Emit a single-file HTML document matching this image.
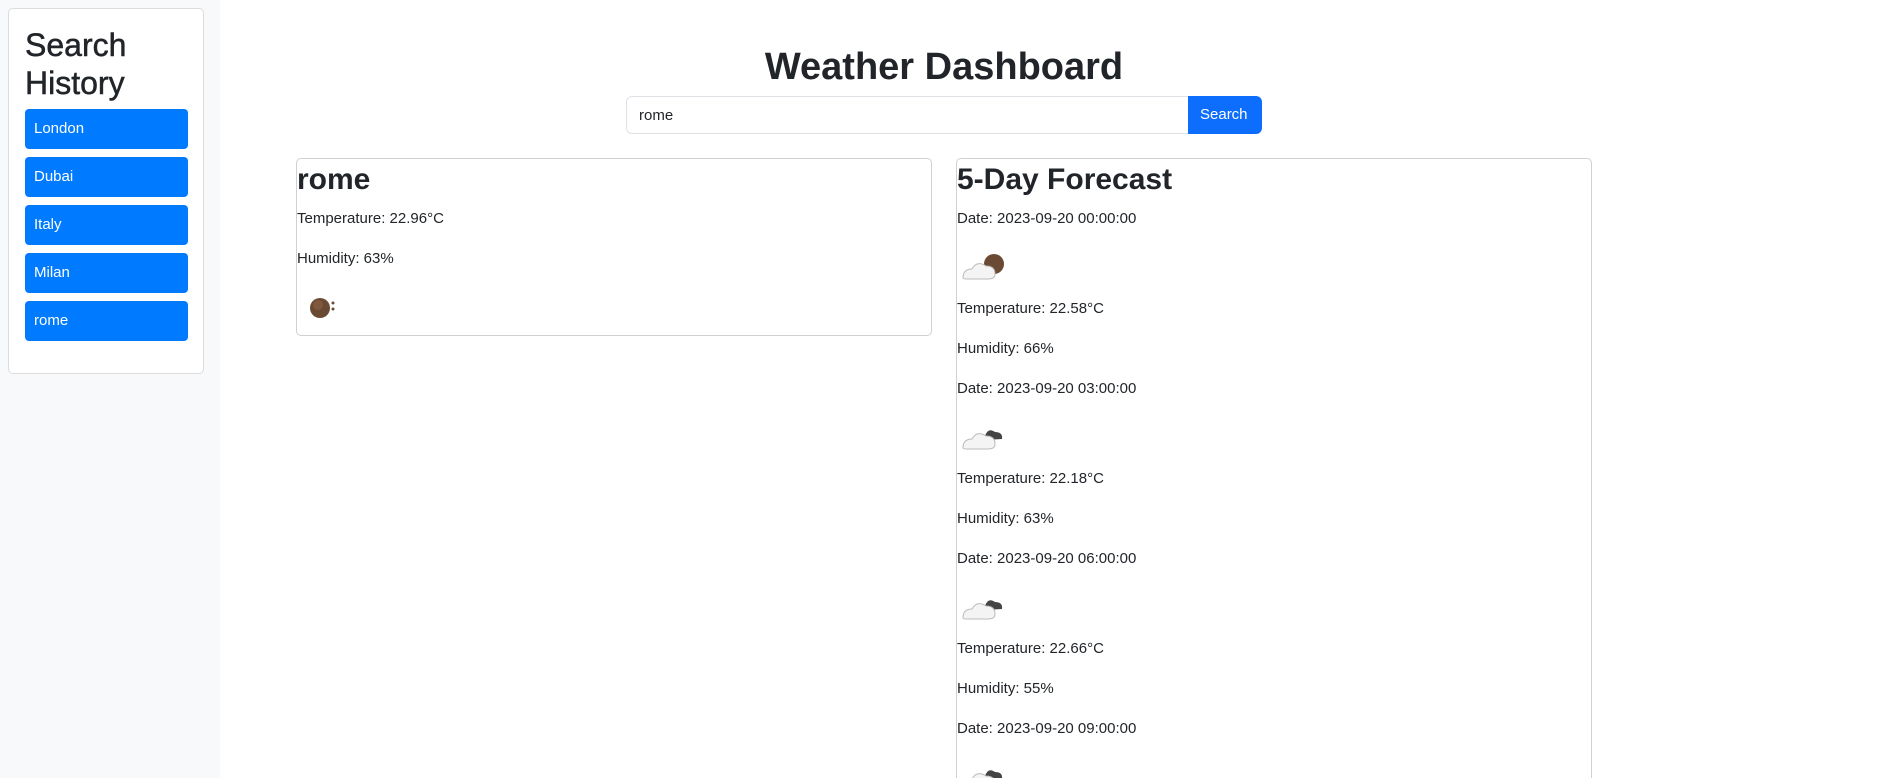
<!DOCTYPE html>
<html><head><meta charset="utf-8"><style>
*{box-sizing:border-box}
html,body{margin:0;width:1888px;height:778px;overflow:hidden}
body{font-family:"Liberation Sans",sans-serif;color:#212529;background:#fff;font-size:15px;line-height:24px;position:relative}
.side{position:absolute;left:0;top:0;width:220px;height:778px;background:#f8f9fa}
.hcard{position:absolute;left:8px;top:8px;width:196px;height:366px;background:#fff;border:1px solid #dcdcdc;border-radius:5px;padding:16px}
.hcard h2{font-size:32px;font-weight:normal;line-height:38px;margin:1px 0 7px 0;-webkit-text-stroke:.5px #212529}
.hb{display:block;width:163px;height:40px;background:#007bff;color:#fff;border-radius:4px;margin-bottom:8px;padding:8px 9px;font-size:15px}
h1{position:absolute;left:0;width:1888px;text-align:center;top:43px;margin:0;font-size:38px;font-weight:bold;line-height:48px}
.inp{position:absolute;left:626px;top:96px;width:563px;height:38px;border:1px solid #dee2e6;border-radius:6px 0 0 6px;padding:7px 12px}
.btn{position:absolute;left:1188px;top:96px;width:74px;height:38px;background:#0d6efd;color:#fff;border-radius:0 6px 6px 0;padding:7px 12px}
.card{position:absolute;border:1px solid #d0d0d0;border-radius:5px;padding-top:2px;overflow:hidden}
.card h2{font-size:30px;font-weight:bold;line-height:38px;margin:0 0 8px}
p{margin:0 0 16px}
.ic{display:block;height:50px;width:60px}
</style></head><body>
<div class="side"><div class="hcard"><h2>Search History</h2>
<div class="hb">London</div><div class="hb">Dubai</div><div class="hb">Italy</div><div class="hb">Milan</div><div class="hb">rome</div></div></div>
<h1>Weather Dashboard</h1>
<div class="inp">rome</div><div class="btn">Search</div>
<div class="card" style="left:296px;top:158px;width:636px;height:178px">
<h2>rome</h2><p>Temperature: 22.96°C</p><p>Humidity: 63%</p>
<svg width="50" height="50" style="position:absolute;left:12px;top:124px"><circle cx="11" cy="25" r="10" fill="#6b4a33"/><circle cx="9" cy="22" r="5" fill="#8a6446" opacity=".6"/><circle cx="24" cy="20" r="1.5" fill="#6b4a33"/><circle cx="24" cy="26" r="1.5" fill="#6b4a33"/></svg>
</div>
<div class="card" style="left:956px;top:158px;width:636px;height:620px;border-bottom:none;border-radius:5px 5px 0 0">
<h2>5-Day Forecast</h2>
<p>Date: 2023-09-20 00:00:00</p>
<svg class="ic"><circle cx="37" cy="17" r="10" fill="#6b4a33"/><path d="M6 31 Q6 22 15 22 Q20 13 29 19 Q38 19 38 27 Q38 32 31 32 L10 32 Q6 32 6 31Z" fill="#f4f4f4" stroke="#bbb"/></svg>
<p>Temperature: 22.58°C</p><p>Humidity: 66%</p>
<p>Date: 2023-09-20 03:00:00</p>
<svg class="ic"><path d="M28 19 Q31 10 38 15 Q46 15 45 22 L28 23Z" fill="#444"/><path d="M6 31 Q6 22 15 22 Q20 13 29 19 Q38 19 38 27 Q38 32 31 32 L10 32 Q6 32 6 31Z" fill="#f4f4f4" stroke="#bbb"/></svg>
<p>Temperature: 22.18°C</p><p>Humidity: 63%</p>
<p>Date: 2023-09-20 06:00:00</p>
<svg class="ic"><path d="M28 19 Q31 10 38 15 Q46 15 45 22 L28 23Z" fill="#444"/><path d="M6 31 Q6 22 15 22 Q20 13 29 19 Q38 19 38 27 Q38 32 31 32 L10 32 Q6 32 6 31Z" fill="#f4f4f4" stroke="#bbb"/></svg>
<p>Temperature: 22.66°C</p><p>Humidity: 55%</p>
<p>Date: 2023-09-20 09:00:00</p>
<svg class="ic"><path d="M28 19 Q31 10 38 15 Q46 15 45 22 L28 23Z" fill="#444"/><path d="M6 31 Q6 22 15 22 Q20 13 29 19 Q38 19 38 27 Q38 32 31 32 L10 32 Q6 32 6 31Z" fill="#f4f4f4" stroke="#bbb"/></svg>
</div>
</body></html>
